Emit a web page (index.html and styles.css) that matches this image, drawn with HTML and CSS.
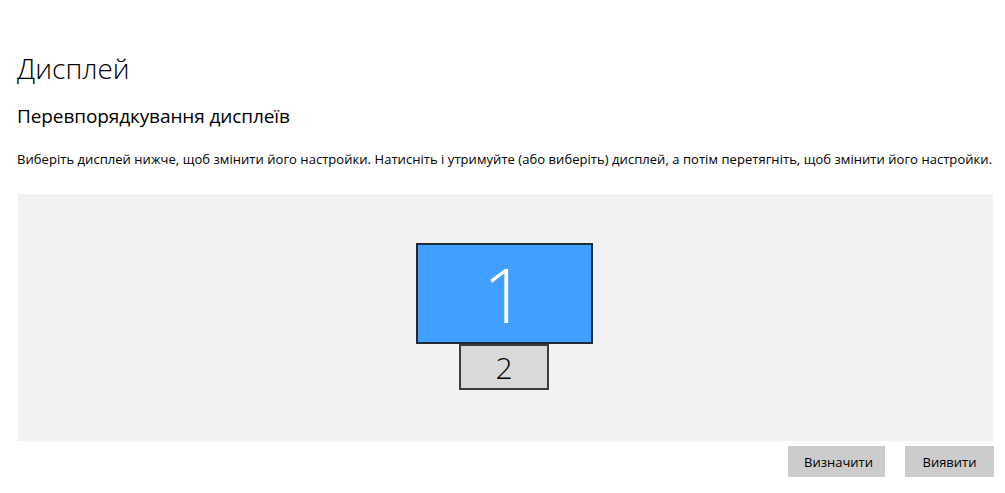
FILE: index.html
```html
<!DOCTYPE html>
<html lang="uk">
<head>
<meta charset="utf-8">
<link rel="stylesheet" href="styles.css">
</head>
<body>
<main class="page">
  <h1 class="title">Дисплей</h1>
  <h2 class="subtitle">Перевпорядкування дисплеїв</h2>
  <p class="desc">Виберіть дисплей нижче, щоб змінити його настройки. Натисніть і утримуйте (або виберіть) дисплей, а потім перетягніть, щоб змінити його настройки.</p>
  <section class="arrange">
    <div class="monitors">
      <div class="mon mon1">1</div>
      <div class="mon mon2">2</div>
    </div>
  </section>
  <div class="actions">
    <button class="btn">Визначити</button>
    <button class="btn">Виявити</button>
  </div>
</main>
</body>
</html>
```
FILE: styles.css
```css
html, body {
  margin: 0;
  padding: 0;
  background: #ffffff;
}
body {
  font-family: "Segoe UI", "Open Sans", "Noto Sans", sans-serif;
  color: #000;
}
.page {
  padding: 0 12px 0 17px;
}
.title {
  margin: 0;
  padding-top: 48px;
  font-size: 28px;
  font-weight: 300;
  line-height: 40px;
}
.subtitle {
  margin: 15px 0 0;
  font-size: 19px;
  font-weight: 400;
  line-height: 26px;
  letter-spacing: -0.1px;
}
.desc {
  margin: 20px 0 0;
  font-size: 13px;
  line-height: 20px;
  white-space: nowrap;
  letter-spacing: 0.05px;
}
.arrange {
  margin-top: 25px;
  margin-left: 1px;
  width: 975px;
  height: 247px;
  background: #f2f2f2;
  display: flex;
  justify-content: center;
}
.monitors {
  margin-top: 49px;
  margin-right: 2px;
  display: flex;
  flex-direction: column;
  align-items: flex-start;
}
.mon {
  box-sizing: border-box;
  display: flex;
  align-items: center;
  justify-content: center;
  font-weight: 300;
}
.mon1 {
  width: 177px;
  height: 101px;
  background: #409fff;
  border: 2px solid #1f2b38;
  color: #fff;
  font-size: 76px;
  font-weight: 200;
}
.mon2 {
  margin-left: 43px;
  margin-top: 0;
  width: 90px;
  height: 46px;
  background: #d9d9d9;
  border: 2px solid #3c3c3c;
  color: #000;
  font-size: 30px;
}
.actions {
  margin-top: 5px;
  width: 977px;
  display: flex;
  justify-content: flex-end;
  gap: 20px;
}
.btn {
  height: 31px;
  padding: 0 16px;
  min-width: 89px;
  border: 0;
  background: #cccccc;
  font-family: inherit;
  font-size: 13px;
  color: #000;
}
.btn:first-child {
  width: 97px;
}
```
